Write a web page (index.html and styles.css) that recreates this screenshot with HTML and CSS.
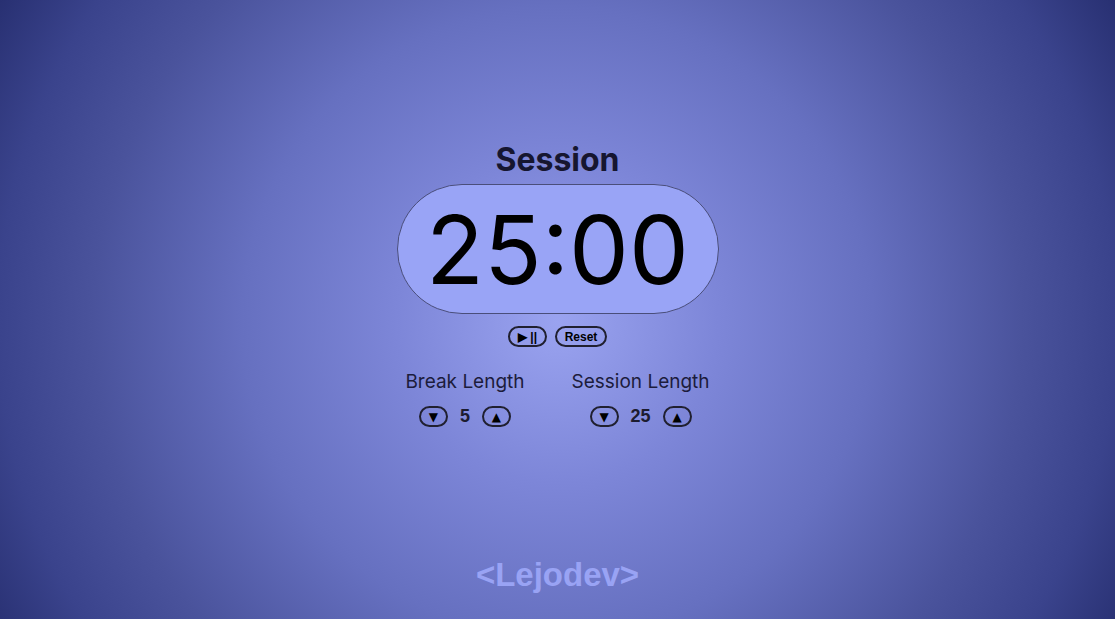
FILE: index.html
```html
<!DOCTYPE html>
<html>
<head>
<meta charset="utf-8">
<link rel="stylesheet" href="styles.css">
</head>
<body>
<div class="page">
  <main class="clock">
    <h1 class="label-title">Session</h1>
    <div class="timer">25:00</div>
    <div class="actions">
      <button class="btn btn-play">▶ ||</button>
      <button class="btn btn-reset">Reset</button>
    </div>
    <div class="settings">
      <div class="setting">
        <div class="setting-label">Break Length</div>
        <div class="setting-row">
          <button class="btn btn-small">▼</button>
          <span class="value">5</span>
          <button class="btn btn-small">▲</button>
        </div>
      </div>
      <div class="setting">
        <div class="setting-label">Session Length</div>
        <div class="setting-row">
          <button class="btn btn-small">▼</button>
          <span class="value">25</span>
          <button class="btn btn-small">▲</button>
        </div>
      </div>
    </div>
  </main>
  <footer class="footer">&lt;Lejodev&gt;</footer>
</div>
</body>
</html>
```

FILE: styles.css
```css
* { box-sizing: border-box; }
html, body { margin: 0; padding: 0; height: 100%; }
body {
  font-family: Inter, "Liberation Sans", sans-serif;
  background: radial-gradient(circle farthest-corner at 50% 52%, #9aa3f0 0%, #7d86d8 25%, #6670c0 49%, #4a539c 72%, #3a438c 87%, #283072 100%);
  color: #14142a;
}
.page {
  height: 100%;
  display: flex;
  flex-direction: column;
  align-items: center;
}
.clock {
  display: flex;
  flex-direction: column;
  align-items: center;
  padding-top: 139px;
}
.label-title {
  margin: 0;
  font-size: 32px;
  font-weight: 700;
  line-height: 42px;
  color: #161630;
}
.timer {
  margin-top: 3px;
  width: 322px;
  height: 130px;
  border: 1px solid #4a4e7a;
  border-radius: 65px;
  background: #99a4f6;
  display: flex;
  align-items: center;
  justify-content: center;
  font-size: 95px;
  font-weight: 400;
  color: #000;
  line-height: 1;
}
.actions {
  margin-top: 12px;
  display: flex;
  gap: 8px;
}
.btn {
  font-family: "Liberation Sans", Arial, sans-serif;
  font-weight: 700;
  background: transparent;
  border: 2px solid #202030;
  border-radius: 11px;
  color: #000;
  padding: 0;
  height: 21px;
  display: flex;
  align-items: center;
  justify-content: center;
}
.btn-play { width: 39px; font-size: 12px; }
.btn-reset { width: 52px; font-size: 12px; }
.settings {
  margin-top: 22px;
  display: flex;
  gap: 47px;
}
.setting {
  display: flex;
  flex-direction: column;
  align-items: center;
}
.setting-label {
  font-size: 19px;
  line-height: 26px;
  color: #1c1c3c;
}
.setting-row {
  margin-top: 11px;
  display: flex;
  align-items: center;
  gap: 11px;
}
.btn-small { width: 29px; height: 21px; font-size: 12px; font-family: "DejaVu Sans", sans-serif; }
.value {
  font-family: "Liberation Sans", Arial, sans-serif;
  font-weight: 700;
  font-size: 18px;
  color: #1c1c30;
  min-width: 10px;
  text-align: center;
  padding: 0 1px;
}
.footer {
  margin-top: auto;
  margin-bottom: 25px;
  font-family: "Liberation Sans", Arial, sans-serif;
  font-weight: 700;
  font-size: 33px;
  color: #99a3f4;
}
```
